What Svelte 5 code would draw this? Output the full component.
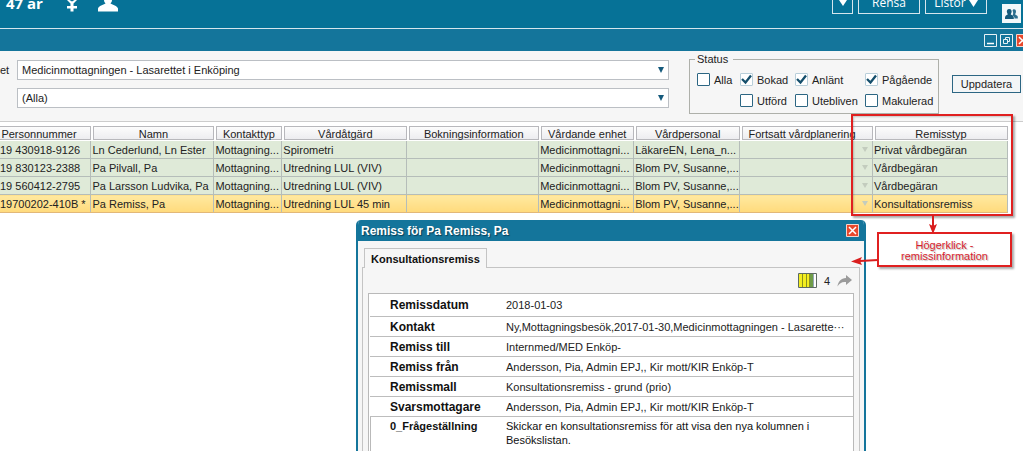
<script>
  const columns = [
    { name: 'Personnummer', width: 91 },
    { name: 'Namn', width: 123 },
    { name: 'Kontakttyp', width: 68 },
    { name: 'Vårdåtgärd', width: 125 },
    { name: 'Bokningsinformation', width: 132 },
    { name: 'Vårdande enhet', width: 95 },
    { name: 'Vårdpersonal', width: 106 },
    { name: 'Fortsatt vårdplanering', width: 133 },
    { name: 'Remisstyp', width: 135 }
  ];
  const total = columns.reduce((sum, c) => sum + c.width, 0);

  const rows = [
    ['19 430918-9126', 'Ln Cederlund, Ln Ester', 'Mottagning...', 'Spirometri', '', 'Medicinmottagni...', 'LäkareEN, Lena_n...', '', 'Privat vårdbegäran'],
    ['19 830123-2388', 'Pa Pilvall, Pa', 'Mottagning...', 'Utredning LUL (VIV)', '', 'Medicinmottagni...', 'Blom PV, Susanne,...', '', 'Vårdbegäran'],
    ['19 560412-2795', 'Pa Larsson Ludvika, Pa', 'Mottagning...', 'Utredning LUL (VIV)', '', 'Medicinmottagni...', 'Blom PV, Susanne,...', '', 'Vårdbegäran'],
    ['19700202-410B *', 'Pa Remiss, Pa', 'Mottagning...', 'Utredning LUL 45 min', '', 'Medicinmottagni...', 'Blom PV, Susanne,...', '', 'Konsultationsremiss']
  ];
  let selected = $state(3);

  let statuses = $state([
    { name: 'Alla', on: false },
    { name: 'Bokad', on: true },
    { name: 'Anlänt', on: true },
    { name: 'Pågående', on: true },
    { name: 'Utförd', on: false },
    { name: 'Utebliven', on: false },
    { name: 'Makulerad', on: false }
  ]);

  const details = [
    ['Remissdatum', '2018-01-03'],
    ['Kontakt', 'Ny,Mottagningsbesök,2017-01-30,Medicinmottagningen - Lasarette···'],
    ['Remiss till', 'Internmed/MED Enköp-'],
    ['Remiss från', 'Andersson, Pia, Admin EPJ,, Kir mott/KIR Enköp-T'],
    ['Remissmall', 'Konsultationsremiss - grund (prio)'],
    ['Svarsmottagare', 'Andersson, Pia, Admin EPJ,, Kir mott/KIR Enköp-T']
  ];
</script>

<div class="app">
  <header class="patient">
    <span class="age">47 år</span>
    <svg class="female" width="12" height="12" viewBox="0 0 12 12" aria-hidden="true">
      <path d="M1 0h2.500L6 1.500 8.500 0H11L7.500 3.500V6H11v2.500H7.500v3h-3v-3H1V6h3.500V3.500z" fill="#fff" />
    </svg>
    <svg class="person" width="20" height="12" viewBox="0 0 20 12" aria-hidden="true">
      <path d="M6 0h8c0 2-1 2.500-1.500 3.500 2.500 1.500 6.500 2 7.500 5v3H0v-3c1-3 5-3.500 7.500-5C7 2.500 6 2 6 0z" fill="#fff" />
    </svg>
    <div class="actions">
      <button class="drop" aria-label="Visa fler">
        <svg width="8" height="6" viewBox="0 0 8 6"><path d="M0 0h8L4 6z" fill="#fff" /></svg>
      </button>
      <button>Rensa</button>
      <button>Listor
        <svg width="9" height="7" viewBox="0 0 9 7"><path d="M0 0h9L4.500 7z" fill="#fff" /></svg>
      </button>
    </div>
    <button class="people" aria-label="Användare">
      <svg width="13" height="12" viewBox="0 0 13 12">
        <path d="M7.500 2.500C8 .8 11 .8 11 3.500c0 1.500-.8 2-.8 3 1 .6 2.600 1 2.600 2.500v1.500H9.500C9.500 8.500 8.500 8 7.500 7.500 8.500 6 8.300 4 7.500 2.500z" fill="#2c6f8f" />
        <path d="M4.200 1C6.500 1 7 3 6.500 4.500c-.2.800-.7 1.200-.7 2C7 7.300 8.800 7.700 8.800 9.500V11H0V9.500C0 7.700 1.600 7.300 2.700 6.500c0-.8-.5-1.200-.7-2C1.500 3 2 1 4.200 1z" fill="#155a7c" />
      </svg>
    </button>
  </header>

  <div class="windowbar">
    <button aria-label="Minimera">
      <svg width="13" height="13" viewBox="0 0 13 13"><path d="M.5.5h12v12H.5z" fill="none" stroke="#e8f2f6" /><path d="M3 9.500h7" stroke="#fff" stroke-width="1.500" /></svg>
    </button>
    <button aria-label="Återställ">
      <svg width="13" height="13" viewBox="0 0 13 13" fill="none" stroke="#e8f2f6"><path d="M.5.5h12v12H.5z" /><path d="M3.500 5.500h4v4h-4zM5.500 5V3.500h4v4H8" /></svg>
    </button>
    <button aria-label="Stäng">
      <svg width="13" height="13" viewBox="0 0 13 13"><path d="M.5.5h12v12H.5z" fill="#e8482c" stroke="#f5d5cc" /><path d="M3 3l7 7M10 3l-7 7" stroke="#fff" stroke-width="1.500" /></svg>
    </button>
  </div>

  <section class="filters">
    <div class="selects">
      <label for="unit">et</label>
      <select id="unit"><option>Medicinmottagningen - Lasarettet i Enköping</option></select>
      <span></span>
      <select aria-label="Urval"><option>(Alla)</option></select>
    </div>
    <fieldset>
      <legend>Status</legend>
      <div class="checks">
        {#each statuses as s}
          <label><input type="checkbox" bind:checked={s.on} />{s.name}</label>
        {/each}
      </div>
    </fieldset>
    <button class="update">Uppdatera</button>
  </section>

  <main>
    <table>
      <colgroup>
        {#each columns as c}<col style:width="{(c.width / total) * 100}%" />{/each}
      </colgroup>
      <thead>
        <tr>{#each columns as c}<th scope="col"><div>{c.name}</div></th>{/each}</tr>
      </thead>
      <tbody>
        {#each rows as row, i}
          <tr class:selected={i === selected} onclick={() => (selected = i)}>
            {#each row as cell, j}
              <td>
                {#if j === 7}
                  <svg class="more" width="6" height="5" viewBox="0 0 6 5" aria-hidden="true"><path d="M0 0h6L3 5z" /></svg>
                {:else}{cell}{/if}
              </td>
            {/each}
          </tr>
        {/each}
      </tbody>
    </table>
  </main>

  <section class="dialog" role="dialog" aria-label="Remiss">
    <div class="title">
      <h2>Remiss för Pa Remiss, Pa</h2>
      <button aria-label="Stäng remiss">
        <svg width="13" height="13" viewBox="0 0 13 13"><path d="M.5.5h12v12H.5z" fill="#e8482c" stroke="#f5d5cc" /><path d="M3 3l7 7M10 3l-7 7" stroke="#fff" stroke-width="1.500" /></svg>
      </button>
    </div>
    <div class="tabs"><button class="tab">Konsultationsremiss</button></div>
    <div class="pane">
      <div class="tools">
        <svg width="19" height="15" viewBox="0 0 19 15" aria-hidden="true">
          <path d="M.5.5h18v14H.5z" fill="#fff" />
          <path d="M1 1h11v13H1z" fill="#f4ee20" />
          <path d="M12 1h3v13h-3z" fill="#6f9c48" />
          <path d="M4.500 1v13M8.500 1v13M11.500 1v13" stroke="#8b9120" />
          <path d="M15.500 1v13" stroke="#93a7b4" />
          <path d="M.5.5h18v14H.5z" fill="none" stroke="#5d6a62" />
        </svg>
        <span>4</span>
        <svg width="15" height="12" viewBox="0 0 15 12" aria-hidden="true">
          <path d="M9 0l6 5-6 5V7C5 6.500 2.500 8 .5 11.500 1 6.500 4 3.500 9 3z" fill="#9b9b9b" />
        </svg>
      </div>
      <div class="sheet">
        <dl>
          {#each details as [key, value]}
            <div><dt>{key}</dt><dd>{value}</dd></div>
          {/each}
        </dl>
        <dl class="question">
          <div><dt>0_Frågeställning</dt><dd>Skickar en konsultationsremiss för att visa den nya kolumnen i Besökslistan.</dd></div>
        </dl>
      </div>
    </div>
  </section>

  <div class="mark"></div>
  <svg class="arrow-down" width="14" height="20" viewBox="0 0 14 20" aria-hidden="true">
    <path d="M7 0v12" stroke="#d91e1e" stroke-width="2" /><path d="M3 9l4 2 4-2-4 10z" fill="#d91e1e" />
  </svg>
  <svg class="arrow-left" width="27" height="12" viewBox="0 0 27 12" aria-hidden="true">
    <path d="M27 5L9 6" stroke="#d91e1e" stroke-width="2" /><path d="M0 6.500L11 2 9 6l2 4z" fill="#d91e1e" />
  </svg>
  <div class="note">Högerklick -<br />remissinformation</div>
</div>

<style>
  :global(body) { margin: 0; background: #fff; }
  .app {
    position: relative;
    height: 100vh;
    overflow: hidden;
    font: 11px/14px "Liberation Sans", Arial, sans-serif;
    color: #222;
  }
  button, select, input { font: inherit; color: inherit; margin: 0; }
  button { padding: 0; }
  svg { display: block; }

  .patient {
    display: flex;
    align-items: flex-start;
    height: 28px;
    overflow: hidden;
    background: #067297;
    border-bottom: 1px solid #d5e6ed;
    color: #fff;
  }
  .age { margin: -7px 23px 0 6px; font: bold 15px/20px "Open Sans", sans-serif; }
  .female { margin-right: 20px; }
  .actions { display: flex; gap: 5px; margin: -8px 15px 0 auto; }
  .actions button {
    display: flex;
    align-items: center;
    justify-content: center;
    gap: 3px;
    width: 62px;
    height: 22px;
    box-sizing: border-box;
    border: 1px solid #d5e6ed;
    background: none;
    font: 12px/16px "Open Sans", sans-serif;
  }
  .actions .drop { width: 21px; }
  .people {
    display: flex;
    align-items: center;
    justify-content: center;
    width: 19px;
    height: 19px;
    margin: 4px 2px 0 0;
    border: 0;
    background: #f2f8fa;
  }

  .windowbar {
    display: flex;
    justify-content: flex-end;
    align-items: center;
    gap: 3px;
    height: 22px;
    margin-right: -6px;
    background: #14759b;
  }
  .windowbar button, .title button { border: 0; background: none; }

  .filters {
    display: flex;
    align-items: flex-start;
    height: 71px;
    box-sizing: border-box;
    background: #f6f6f6;
    border-bottom: 1px solid #ccc;
  }
  .selects {
    flex: 1;
    display: grid;
    grid-template-columns: 17px 1fr;
    row-gap: 8px;
    align-items: center;
    margin: 9px 20px 0 0;
  }
  select {
    appearance: none;
    width: 100%;
    height: 20px;
    padding: 0 20px 0 4px;
    border: 1px solid #bbbfc4;
    border-radius: 0;
    background: #fff url("data:image/svg+xml,%3Csvg xmlns='http://www.w3.org/2000/svg' width='6' height='6'%3E%3Cpath d='M0 0h6L3 6z' fill='%23155a7c'/%3E%3C/svg%3E") no-repeat right 4px center;
  }
  fieldset {
    width: 250px;
    box-sizing: border-box;
    min-width: 0;
    margin: 1px 13px 0 0;
    padding: 0 0 2px 7px;
    border: 1px solid #aeb0aa;
  }
  legend { padding: 0 5px 0 2px; margin-left: -2px; line-height: 14px; }
  .checks {
    display: grid;
    grid-template-columns: 43px 55px 70px 1fr;
    grid-auto-rows: 21px;
    padding-top: 3px;
  }
  .checks label { display: flex; align-items: center; gap: 4px; }
  .checks label:nth-child(5) { grid-column: 2; }
  .checks input {
    appearance: none;
    flex: none;
    width: 13px;
    height: 13px;
    border: 1px solid #2c6683;
    border-radius: 1px;
    background: #fff;
  }
  .checks input:checked {
    border-color: #b9cfda;
    background: #fff url("data:image/svg+xml,%3Csvg xmlns='http://www.w3.org/2000/svg' width='11' height='11'%3E%3Cpath d='M1 5l3.500 3.500L10 1.500' fill='none' stroke='%23154f6c' stroke-width='2.300'/%3E%3C/svg%3E") center no-repeat;
  }
  .update {
    width: 69px;
    height: 18px;
    margin: 24px 2px 0 0;
    border: 1px solid #2c6683;
    background: #f3f5f6;
    white-space: nowrap;
  }

  main { padding: 4px 15px 0 0; }
  table { width: 100%; table-layout: fixed; border-collapse: collapse; }
  th { padding: 0 0 1px 2px; font-weight: normal; }
  th:first-child { padding-left: 0; }
  th div {
    height: 12px;
    line-height: 14px;
    border: 1px solid #b8b8bc;
    background: linear-gradient(#fcfcfc, #ededf0);
    text-align: center;
    white-space: nowrap;
  }
  th:first-child div { padding-right: 12px; border-left: 0; }
  th:nth-child(8) div { padding-right: 10px; }
  td {
    height: 17px;
    padding: 0 0 0 1px;
    border-right: 1px solid #b5bdb9;
    border-bottom: 1px solid #b5bdb9;
    background: #dfead8;
    white-space: nowrap;
    overflow: hidden;
  }
  td:first-child { padding-left: 0; }
  .selected td {
    border-bottom-color: #e2b878;
    background: linear-gradient(#ffe9a0, #ffda7c);
  }
  .more { margin: 0 4px 0 auto; fill: #c3ccbe; }

  .dialog {
    position: absolute;
    top: 220px;
    bottom: 0;
    left: 356px;
    right: 157px;
    display: flex;
    flex-direction: column;
    border: solid #14759b;
    border-width: 0 2px;
    border-radius: 5px 5px 0 0;
    background: #f6f6f6;
    overflow: hidden;
  }
  .title {
    display: flex;
    align-items: center;
    justify-content: space-between;
    height: 21px;
    padding: 0 5px 0 3px;
    background: #14759b;
  }
  h2 { margin: 0; font: bold 12px/20px "Liberation Sans", Arial, sans-serif; color: #fff; text-shadow: 1px 1px 1px #093f57; }
  .tabs { display: flex; padding: 7px 6px 0; }
  .tab {
    position: relative;
    z-index: 1;
    height: 20px;
    padding: 0 6px;
    margin-bottom: -1px;
    border: 1px solid #c4c4c4;
    border-bottom: 0;
    background: #f6f6f6;
    font-weight: bold;
    color: #111;
  }
  .pane {
    flex: 1;
    display: flex;
    flex-direction: column;
    margin: 0 4px;
    padding: 0 5px;
    border: 1px solid #c4c4c4;
    border-bottom: 0;
  }
  .tools { display: flex; align-items: center; justify-content: flex-end; gap: 7px; height: 25px; padding: 0 2px 0 0; }
  .sheet { flex: 1; display: flex; flex-direction: column; border: 1px solid #b9b9b9; border-bottom: 0; background: #fff; }
  dl { margin: 0 0 0 1px; }
  dl div { display: grid; grid-template-columns: 116px 1fr; padding: 3px 0 1px 20px; border-bottom: 1px solid #bdbdbd; line-height: 15px; }
  dl:first-child div:first-child { padding: 4px 0 3px 20px; }
  dt { font-weight: bold; font-size: 12px; color: #111; }
  dd { margin: 0; white-space: nowrap; overflow: hidden; }
  .question { flex: 1; border-left: 1px solid #b9b9b9; }
  .question div { border: 0; padding: 2px 30px 0 19px; line-height: 14px; }
  .question dt { font-size: 11px; }
  .question dd { white-space: normal; color: #111; }

  .mark {
    position: absolute;
    top: 114px;
    right: 10px;
    width: 158px;
    height: 98px;
    border: 2px solid #e02020;
    box-shadow: 2px 2px 2px #0005, inset 1px 1px 2px #0003;
  }
  .arrow-down { position: absolute; top: 215px; right: 83px; }
  .arrow-left { position: absolute; top: 255px; right: 145px; }
  .note {
    position: absolute;
    top: 232px;
    right: 11px;
    width: 131px;
    height: 25px;
    padding-top: 6px;
    border: 2px solid #e02020;
    background: #fff;
    box-shadow: 2px 2px 2px #0005;
    line-height: 11px;
    text-align: center;
    color: #d91e2e;
    text-shadow: 1px 1px 1px #0004;
  }
</style>
